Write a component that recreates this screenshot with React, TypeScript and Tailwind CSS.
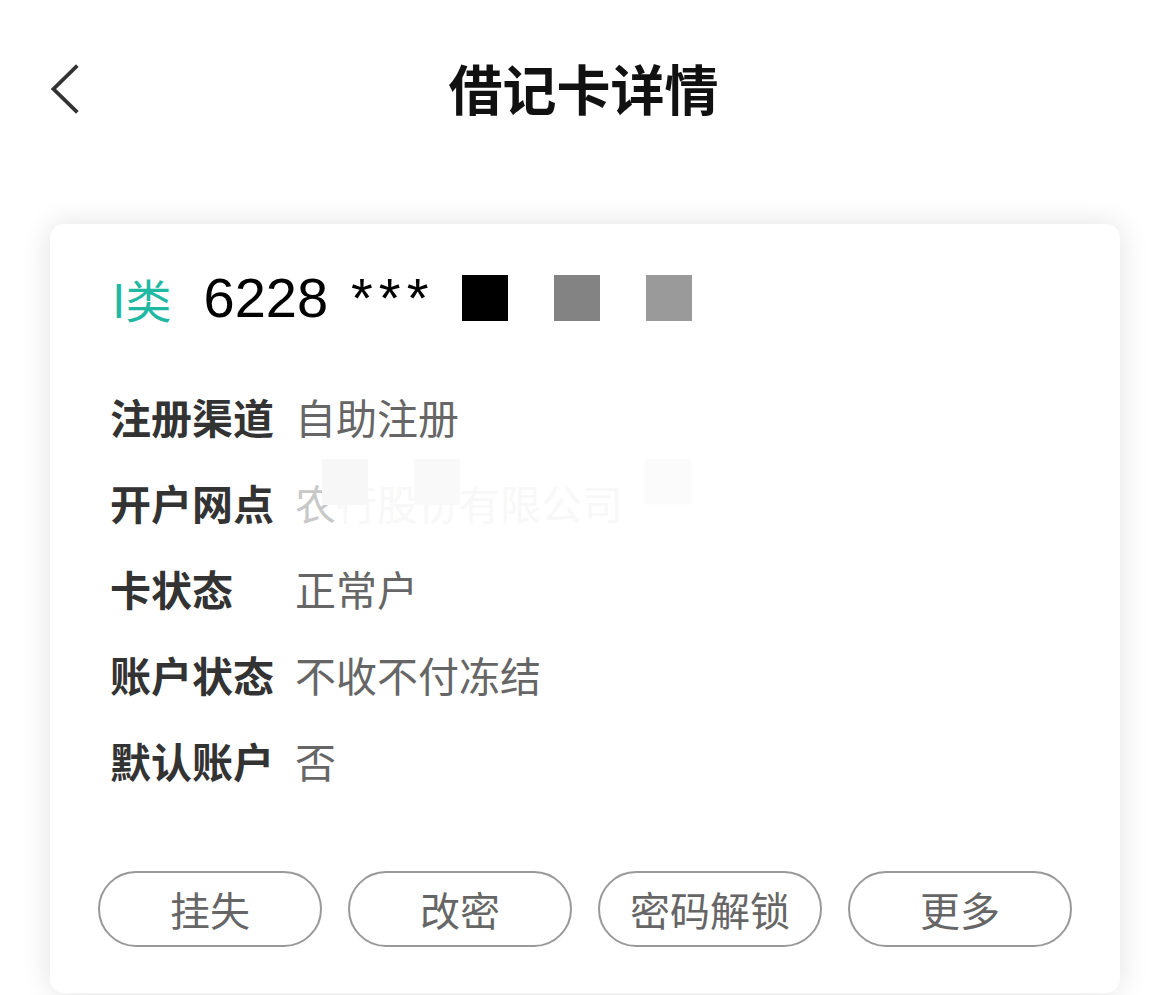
import React from "react";

const font = { fontFamily: '"Noto Sans CJK SC", "Noto Sans", sans-serif' };
const latin = { fontFamily: '"Liberation Sans", Arial, sans-serif' };

const rows: { label: string; value: string; hidden?: boolean }[] = [
  { label: "注册渠道", value: "自助注册" },
  { label: "开户网点", value: "农", hidden: true },
  { label: "卡状态", value: "正常户" },
  { label: "账户状态", value: "不收不付冻结" },
  { label: "默认账户", value: "否" },
];

const actions = ["挂失", "改密", "密码解锁", "更多"];

export default function App() {
  return (
    <div className="min-h-screen bg-white" style={font}>
      {/* Header */}
      <header className="relative flex h-[176px] items-center justify-center">
        <button className="absolute left-[44px] top-[62px] flex h-[54px] w-[40px] items-center justify-center">
          <svg width="32" height="50" viewBox="0 0 32 50" fill="none">
            <path d="M28 3 L5.5 25 L28 47" stroke="#333" strokeWidth="3.8" strokeLinecap="square" strokeLinejoin="miter" />
          </svg>
        </button>
        <h1 className="text-[54px] font-bold leading-none text-[#111]">借记卡详情</h1>
      </header>

      {/* Card */}
      <div className="ml-[50px] mr-[47px] mt-12 rounded-[14px] bg-white px-12 pb-[46px] pt-[44px] shadow-[0_0_30px_rgba(0,0,0,0.12)]">
        <div className="flex h-[60px] items-center px-[14px]">
          <span className="text-[46px] leading-none text-[#1fb9a3]">I类</span>
          <span className="ml-[32px] text-[56px] leading-none text-black" style={latin}>
            6228
          </span>
          <span className="ml-[23px] text-[56px] leading-none tracking-[6px] text-black" style={latin}>
            ***
          </span>
          <span className="ml-[28px] h-[46px] w-[46px] bg-black" />
          <span className="ml-[46px] h-[46px] w-[46px] bg-[#838383]" />
          <span className="ml-[46px] h-[46px] w-[46px] bg-[#9a9a9a]" />
        </div>

        <div className="mt-[45px] flex flex-col px-[12px]">
          {rows.map((r) => (
            <div key={r.label} className="flex h-[86px] items-center">
              <span className="w-[185px] text-[41px] font-bold leading-none text-[#333]">{r.label}</span>
              {r.hidden ? (
                <span className="relative text-[41px] leading-none">
                  <span className="text-[#c8c8c8]">农</span>
                  <span className="text-[#f8f8f8]">行股份有限公司</span>
                  <span className="absolute left-[27px] top-[-23px] h-[46px] w-[46px] bg-[#f7f7f7]" />
                  <span className="absolute left-[119px] top-[-23px] h-[46px] w-[46px] bg-[#f9f9f9]" />
                  <span className="absolute left-[350px] top-[-23px] h-[46px] w-[46px] bg-[#fbfbfb]" />
                </span>
              ) : (
                <span className="text-[41px] leading-none text-[#666]">{r.value}</span>
              )}
            </div>
          ))}
        </div>

        <div className="mt-[68px] grid grid-cols-4 gap-[26px]">
          {actions.map((a) => (
            <button
              key={a}
              className="flex h-[76px] items-center justify-center rounded-full border-2 border-[#999] text-[40px] leading-none text-[#666]"
            >
              {a}
            </button>
          ))}
        </div>
      </div>
    </div>
  );
}
